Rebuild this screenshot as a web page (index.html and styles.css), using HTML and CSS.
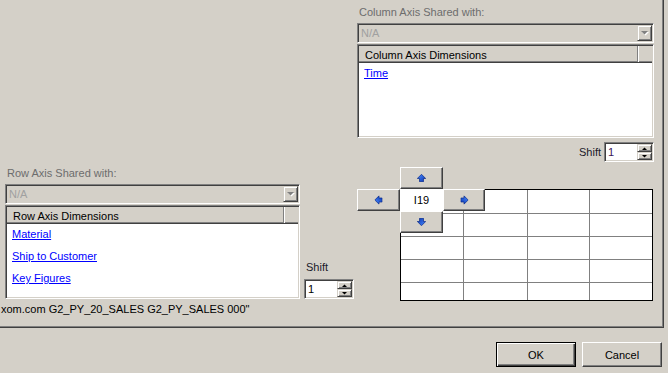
FILE: index.html
```html
<!DOCTYPE html>
<html lang="en">
<head>
<meta charset="UTF-8" />
<title>Axis Settings</title>
<link rel="stylesheet" href="styles.css">
</head>
<body>

<svg class="defs" width="0" height="0">
  <defs>
    <linearGradient id="arrowFill" x1="0" y1="0" x2="1" y2="1">
      <stop offset="0" stop-color="#4a8cff" />
      <stop offset="1" stop-color="#0a34b0" />
    </linearGradient>
  </defs>
</svg>

<div class="dialog">
  <div class="frame">

    <div class="left">
      <div class="row-axis">
        <div class="axis row">
          <div class="caption">Row Axis Shared with:</div>
          <div class="combo">
            <span class="combo-text">N/A</span>
            <span class="drop"><svg width="8" height="5" viewBox="0 0 8 5"><polygon points="1,1 8,1 4.5,4.5" fill="#fff"/><polygon points="0,0 7,0 3.5,3.5" fill="#808080"/></svg></span>
          </div>
          <div class="dims">
            <div class="dims-head"><span class="head-cell">Row Axis Dimensions</span><span class="head-rest"></span></div>
            <ul class="dims-list">
              <li><a href="#">Material</a></li>
              <li><a href="#">Ship to Customer</a></li>
              <li><a href="#">Key Figures</a></li>
            </ul>
          </div>
        </div>
        <div class="shift stack">
          <span class="shift-label">Shift</span>
          <div class="spin">
            <span class="spin-val">1</span>
            <span class="spin-btns">
              <span class="spin-btn"><svg width="5" height="3" viewBox="0 0 5 3"><polygon points="0,3 5,3 2.5,0.5" fill="#000"/></svg></span>
              <span class="spin-btn"><svg width="5" height="3" viewBox="0 0 5 3"><polygon points="0,0 5,0 2.5,2.5" fill="#000"/></svg></span>
            </span>
          </div>
        </div>
      </div>
      <div class="status">xom.com G2_PY_20_SALES G2_PY_SALES 000"</div>
    </div>

    <div class="right">
      <div class="axis col">
        <div class="caption">Column Axis Shared with:</div>
        <div class="combo">
          <span class="combo-text">N/A</span>
          <span class="drop"><svg width="8" height="5" viewBox="0 0 8 5"><polygon points="1,1 8,1 4.5,4.5" fill="#fff"/><polygon points="0,0 7,0 3.5,3.5" fill="#808080"/></svg></span>
        </div>
        <div class="dims">
          <div class="dims-head"><span class="head-cell">Column Axis Dimensions</span><span class="head-rest"></span></div>
          <ul class="dims-list">
            <li><a href="#">Time</a></li>
          </ul>
        </div>
      </div>

      <div class="shift inline">
        <span class="shift-label">Shift</span>
        <div class="spin">
          <span class="spin-val purple">1</span>
          <span class="spin-btns">
            <span class="spin-btn"><svg width="5" height="3" viewBox="0 0 5 3"><polygon points="0,3 5,3 2.5,0.5" fill="#000"/></svg></span>
            <span class="spin-btn"><svg width="5" height="3" viewBox="0 0 5 3"><polygon points="0,0 5,0 2.5,2.5" fill="#000"/></svg></span>
          </span>
        </div>
      </div>

      <div class="nav">
        <div class="sheet">
          <table>
            <tr class="first"><td></td><td></td><td></td><td></td></tr>
            <tr><td></td><td></td><td></td><td></td></tr>
            <tr><td></td><td></td><td></td><td></td></tr>
            <tr><td></td><td></td><td></td><td></td></tr>
            <tr><td></td><td></td><td></td><td></td></tr>
          </table>
        </div>
        <button class="nav-btn go-up"><svg class="arrow" width="9" height="8" viewBox="0 0 9 8"><path d="M4.5 0.3 L8.7 4.5 H6.5 V7.7 H2.5 V4.5 H0.3 Z" fill="url(#arrowFill)" stroke="#0a2a86" stroke-width="0.7"/></svg></button>
        <button class="nav-btn go-left"><svg class="arrow" width="9" height="8" viewBox="0 0 9 8"><path d="M4.5 0.3 L8.7 4.5 H6.5 V7.7 H2.5 V4.5 H0.3 Z" fill="url(#arrowFill)" stroke="#0a2a86" stroke-width="0.7"/></svg></button>
        <div class="cell-ref">I19</div>
        <button class="nav-btn go-right"><svg class="arrow" width="9" height="8" viewBox="0 0 9 8"><path d="M4.5 0.3 L8.7 4.5 H6.5 V7.7 H2.5 V4.5 H0.3 Z" fill="url(#arrowFill)" stroke="#0a2a86" stroke-width="0.7"/></svg></button>
        <button class="nav-btn go-down"><svg class="arrow" width="9" height="8" viewBox="0 0 9 8"><path d="M4.5 0.3 L8.7 4.5 H6.5 V7.7 H2.5 V4.5 H0.3 Z" fill="url(#arrowFill)" stroke="#0a2a86" stroke-width="0.7"/></svg></button>
      </div>
    </div>

  </div>

  <div class="actions">
    <button class="btn default">OK</button>
    <button class="btn">Cancel</button>
  </div>
</div>

</body>
</html>
```

FILE: styles.css
```css
*, *::before, *::after {
  box-sizing: border-box;
}
body {
  margin: 0;
  background: #d4d0c8;
  color: #000;
  font-family: "Liberation Sans", Arial, sans-serif;
  font-size: 11px;
  width: 668px;
  height: 373px;
  overflow: hidden;
}
.defs {
  position: absolute;
}
.frame {
  display: flex;
  width: 664px;
  height: 328px;
  border-right: 1px solid #404040;
  border-bottom: 1px solid #404040;
  box-shadow: inset -1px -1px #808080;
}

/* left side: row axis */
.left {
  width: 357px;
  flex: none;
  padding-top: 167px;
}
.row-axis {
  display: flex;
  align-items: flex-end;
  padding-left: 5px;
}
.axis.row {
  width: 295px;
}
.status {
  margin-top: 4px;
  padding-left: 1px;
  line-height: 13px;
  white-space: nowrap;
}

/* right side: column axis */
.right {
  flex: 1;
  padding-top: 6px;
}
.axis.col {
  width: 297px;
}

.caption {
  color: #6d6d6d;
  line-height: 13px;
  padding-left: 2px;
  margin-bottom: 4px;
}
.combo {
  display: flex;
  height: 20px;
  padding: 1px;
  border: 1px solid;
  border-color: #808080 #fff #fff #808080;
  box-shadow: inset 1px 1px #404040, inset -1px -1px #d4d0c8;
  background: #d4d0c8;
}
.combo-text {
  flex: 1;
  padding-left: 2px;
  line-height: 16px;
  color: #a0a0a0;
}
.drop {
  display: flex;
  align-items: center;
  justify-content: center;
  width: 15px;
  height: 16px;
  border: 1px solid;
  border-color: #d4d0c8 #404040 #404040 #d4d0c8;
  box-shadow: inset 1px 1px #fff, inset -1px -1px #808080;
}
.drop svg {
  margin: 1px 0 0 1px;
}

.dims {
  height: 94px;
  margin-top: 1px;
  padding: 1px;
  border: 1px solid;
  border-color: #808080 #fff #fff #808080;
  box-shadow: inset 1px 1px #404040, inset -1px -1px #d4d0c8;
  background: #fff;
}
.dims-head {
  display: flex;
  height: 17px;
  background: #d4d0c8;
  border-bottom: 1px solid #404040;
}
.head-cell {
  flex: 1;
  padding: 2px 0 0 6px;
  line-height: 14px;
  border-right: 1px solid #808080;
  box-shadow: inset 0 -1px #808080;
}
.head-rest {
  width: 14px;
  border-left: 1px solid #fff;
  box-shadow: inset 0 -1px #808080;
}
.dims-list {
  list-style: none;
  margin: 0;
  padding: 0 0 0 5px;
}
.dims-list li {
  line-height: 20px;
  margin-bottom: 2px;
}
.dims-list a {
  color: #0000ff;
}

/* shift spinners */
.shift.inline {
  display: flex;
  justify-content: flex-end;
  align-items: center;
  gap: 3px;
  width: 297px;
  margin-top: 4px;
}
.shift.stack {
  display: flex;
  flex-direction: column;
  margin-left: 4px;
}
.shift.stack .shift-label {
  padding-left: 2px;
  margin-bottom: 5px;
  line-height: 13px;
}
.shift-label {
  color: #1a1a2a;
}
.spin {
  display: flex;
  width: 50px;
  height: 20px;
  padding: 1px;
  border: 1px solid;
  border-color: #808080 #fff #fff #808080;
  box-shadow: inset 1px 1px #404040, inset -1px -1px #d4d0c8;
  background: #fff;
}
.spin-val {
  flex: 1;
  padding-left: 2px;
  line-height: 16px;
}
.spin-val.purple {
  color: #3a1458;
}
.spin-btns {
  display: flex;
  flex-direction: column;
  width: 15px;
}
.spin-btn {
  flex: 1;
  display: flex;
  align-items: center;
  justify-content: center;
  background: #d4d0c8;
  border: 1px solid;
  border-color: #d4d0c8 #404040 #404040 #d4d0c8;
  box-shadow: inset 1px 1px #fff, inset -1px -1px #808080;
}

/* cell navigator over the sheet */
.nav {
  display: grid;
  grid-template-columns: 43px 43px 42px 168px;
  grid-template-rows: 22px 22px 22px auto;
  margin-top: 5px;
}
.sheet {
  grid-column: 2 / 5;
  grid-row: 2 / 5;
  width: 253px;
  height: 112px;
  overflow: hidden;
  border: 1px solid #000;
  background: #fff;
}
.sheet table {
  border-collapse: separate;
  border-spacing: 0;
  table-layout: fixed;
  width: 251px;
}
.sheet td {
  height: 23px;
  padding: 0;
  border-right: 1px solid #808080;
  border-bottom: 1px solid #808080;
}
.sheet tr.first td {
  height: 24px;
}
.sheet td:nth-child(1) { width: 63px; }
.sheet td:nth-child(2) { width: 64px; }
.sheet td:nth-child(3) { width: 62px; }
.sheet td:nth-child(4) { border-right: none; }

.nav-btn {
  z-index: 1;
  display: flex;
  align-items: center;
  justify-content: center;
  padding: 0;
  margin: 0;
  background: #d4d0c8;
  border: 1px solid;
  border-color: #fff #404040 #404040 #fff;
  box-shadow: inset -1px -1px #808080;
}
.nav-btn.go-up { grid-column: 2; grid-row: 1; }
.nav-btn.go-left { grid-column: 1; grid-row: 2; }
.nav-btn.go-right { grid-column: 3; grid-row: 2; }
.nav-btn.go-down { grid-column: 2; grid-row: 3; }
.go-left .arrow { transform: rotate(-90deg); }
.go-right .arrow { transform: rotate(90deg); }
.go-down .arrow { transform: rotate(180deg); }
.cell-ref {
  z-index: 1;
  grid-column: 2;
  grid-row: 2;
  background: #fff;
  text-align: center;
  line-height: 22px;
}

/* dialog buttons */
.actions {
  display: flex;
  justify-content: flex-end;
  gap: 6px;
  padding: 14px 6px 0 0;
}
.btn {
  width: 80px;
  height: 25px;
  padding: 0;
  font-family: inherit;
  font-size: 11px;
  color: #000;
  background: #d4d0c8;
  border: 1px solid;
  border-color: #fff #404040 #404040 #fff;
  box-shadow: inset -1px -1px #808080;
}
.btn.default {
  border: 1px solid #000;
  box-shadow: inset 1px 1px #fff, inset -1px -1px #404040, inset -2px -2px #808080;
}
```
